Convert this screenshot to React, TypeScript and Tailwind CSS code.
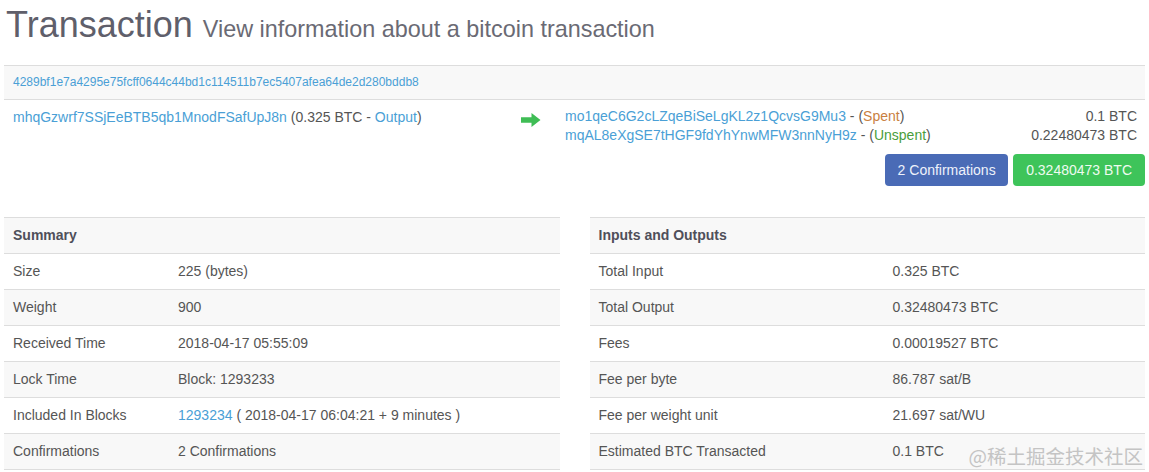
import React from "react";

const link = "text-[#4a9fd6]";

function Row({ label, children, striped, w }: { label: React.ReactNode; children?: React.ReactNode; striped?: boolean; w: string }) {
  return (
    <div className={`flex h-[36px] items-center border-t border-[#dddddd] ${striped ? "bg-[#f8f8f8]" : "bg-white"}`}>
      <div className={`${w} shrink-0 pl-[9px] whitespace-nowrap`}>{label}</div>
      <div className="whitespace-nowrap">{children}</div>
    </div>
  );
}

function Arrow() {
  return (
    <svg width="20" height="14" viewBox="0 0 20 14" className="block">
      <path d="M0 4.2 H10.5 V0 L19.5 7 L10.5 14 V9.8 H0 Z" fill="#3fbd55" />
    </svg>
  );
}

export default function App() {
  return (
    <div className="relative h-[472px] overflow-hidden bg-white px-[4px] text-[14px] text-[#555555] font-['Liberation_Sans',Arial,sans-serif]">
      <div className="h-[45px] pt-[5px] pl-[2px]">
        <h1 className="whitespace-nowrap leading-[40px] font-normal">
          <span className="text-[36px] text-[#5f5f6b]">Transaction </span>
          <span className="text-[23.4px] text-[#6a6a74]">View information about a bitcoin transaction</span>
        </h1>
      </div>

      <div className="mt-[20px]">
        <div className="h-[34px] border-t border-[#dddddd] bg-[#f8f8f8] pl-[9px] pt-[8px] text-[12px] leading-[17px]">
          <span className={link}>4289bf1e7a4295e75fcff0644c44bd1c114511b7ec5407afea64de2d280bddb8</span>
        </div>
        <div className="flex border-t border-[#dddddd]">
          <div className="w-[508px] shrink-0 whitespace-nowrap pl-[9px] pt-[7px] leading-[20px]">
            <span className={link}>mhqGzwrf7SSjEeBTB5qb1MnodFSafUpJ8n</span> (0.325 BTC - <span className={link}>Output</span>)
          </div>
          <div className="w-[44px] shrink-0 pl-[9px] pt-[13px]">
            <Arrow />
          </div>
          <div className="flex-1 pt-[7px]">
            <div className="flex justify-between pl-[9px] pr-[8px] leading-[19px]">
              <span className="whitespace-nowrap">
                <span className={link}>mo1qeC6G2cLZqeBiSeLgKL2z1QcvsG9Mu3</span> - (<span className="text-[#c9803f]">Spent</span>)
              </span>
              <span>0.1 BTC</span>
            </div>
            <div className="flex justify-between pl-[9px] pr-[8px] leading-[19px]">
              <span className="whitespace-nowrap">
                <span className={link}>mqAL8eXgSE7tHGF9fdYhYnwMFW3nnNyH9z</span> - (<span className="text-[#4a9e3b]">Unspent</span>)
              </span>
              <span>0.22480473 BTC</span>
            </div>
            <div className="mt-[9px] flex justify-end gap-[5px]">
              <div className="flex h-[32px] items-center rounded-[4px] bg-[#4a6bb6] px-[12.5px] text-[#eef2fb]">2 Confirmations</div>
              <div className="flex h-[32px] items-center rounded-[4px] bg-[#3ec45a] px-[13px] text-[#eefbf0]">0.32480473 BTC</div>
            </div>
          </div>
        </div>
      </div>

      <div className="mt-[31px] grid grid-cols-2 gap-[30px]">
        <div className="border-b border-[#dddddd]">
          <Row w="w-[174px]" striped label={<span className="font-bold text-[#4f4f5a]">Summary</span>} />
          <Row w="w-[174px]" label="Size">225 (bytes)</Row>
          <Row w="w-[174px]" striped label="Weight">900</Row>
          <Row w="w-[174px]" label="Received Time">2018-04-17 05:55:09</Row>
          <Row w="w-[174px]" striped label="Lock Time">Block: 1293233</Row>
          <Row w="w-[174px]" label="Included In Blocks">
            <span className={link}>1293234</span> ( 2018-04-17 06:04:21 + 9 minutes )
          </Row>
          <Row w="w-[174px]" striped label="Confirmations">2 Confirmations</Row>
        </div>
        <div className="border-b border-[#dddddd]">
          <Row w="w-[303px]" striped label={<span className="font-bold text-[#4f4f5a]">Inputs and Outputs</span>} />
          <Row w="w-[303px]" label="Total Input">0.325 BTC</Row>
          <Row w="w-[303px]" striped label="Total Output">0.32480473 BTC</Row>
          <Row w="w-[303px]" label="Fees">0.00019527 BTC</Row>
          <Row w="w-[303px]" striped label="Fee per byte">86.787 sat/B</Row>
          <Row w="w-[303px]" label="Fee per weight unit">21.697 sat/WU</Row>
          <Row w="w-[303px]" striped label="Estimated BTC Transacted">0.1 BTC</Row>
        </div>
      </div>

      <div className="absolute bottom-[4px] right-[6px] text-[19.5px] leading-[24px] text-[#c4c4c4] font-['Noto_Sans_CJK_SC',sans-serif]">
        @稀土掘金技术社区
      </div>
    </div>
  );
}
